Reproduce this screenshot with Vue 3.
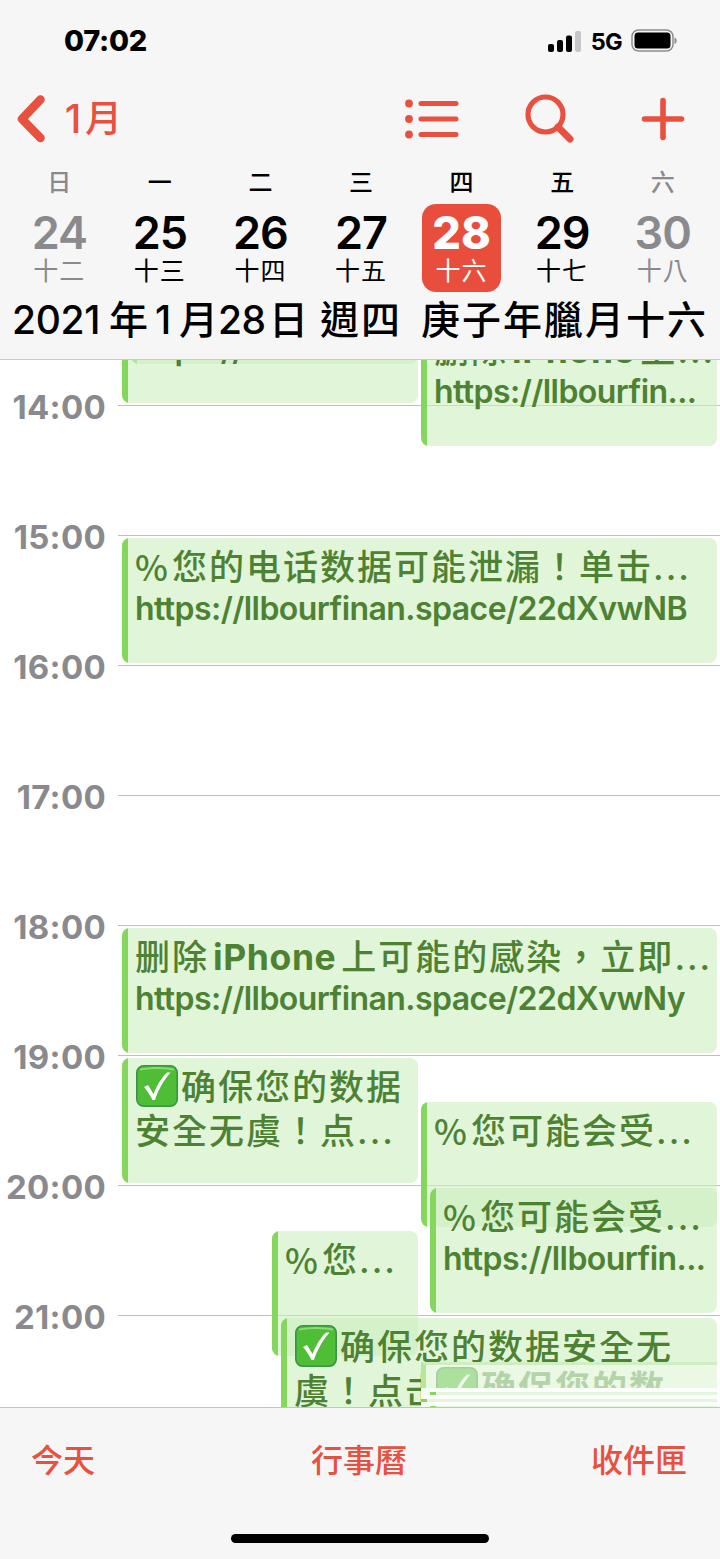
<template>
  <div class="phone">
    <header class="top">
      <div class="status-bar">
        <span class="clock">07:02</span>
        <div class="status-icons">
          <svg class="signal" width="33" height="21" viewBox="0 0 33 21">
            <rect x="0" y="13" width="6" height="8" rx="2" />
            <rect x="9" y="9" width="6" height="12" rx="2" />
            <rect x="18" y="4.500" width="6" height="16.500" rx="2" />
            <rect x="27" y="0" width="6" height="21" rx="2" fill="#c6c6c6" />
          </svg>
          <span class="network">5G</span>
          <svg class="battery" width="47" height="24" viewBox="0 0 47 24">
            <rect x="1" y="1" width="41" height="21" rx="6.500" fill="none" stroke="#8f8f8f" stroke-width="1.500" />
            <rect x="3.500" y="3.500" width="36" height="16" rx="3.500" />
            <path d="M43.500 8.500c3 1 3 5.500 0 6.500z" fill="#8f8f8f" />
          </svg>
        </div>
      </div>

      <nav class="nav-bar">
        <button class="back">
          <svg width="30" height="48" viewBox="0 0 30 48">
            <path d="M24.500 4.500L6 24l18.500 19" fill="none" stroke="currentColor" stroke-width="8.500" stroke-linecap="round" stroke-linejoin="round" />
          </svg>
          <span class="back-label"><span class="back-num">1</span>月</span>
        </button>
        <div class="nav-actions">
          <svg width="54" height="40" viewBox="0 0 54 40">
            <g fill="currentColor">
              <circle cx="4" cy="4.500" r="3.900" />
              <circle cx="4" cy="20" r="3.900" />
              <circle cx="4" cy="35.500" r="3.900" />
            </g>
            <path d="M16 4.500h35M16 20h35M16 35.500h35" stroke="currentColor" stroke-width="5" stroke-linecap="round" />
          </svg>
          <svg width="50" height="50" viewBox="0 0 50 50">
            <circle cx="20.500" cy="20.500" r="17.500" fill="none" stroke="currentColor" stroke-width="5.200" />
            <path d="M33 33l12 12" stroke="currentColor" stroke-width="7" stroke-linecap="round" />
          </svg>
          <svg width="44" height="44" viewBox="0 0 44 44">
            <path d="M22 3.500v37M3.500 22h37" stroke="currentColor" stroke-width="5.600" stroke-linecap="round" />
          </svg>
        </div>
      </nav>

      <div class="week">
        <div
          v-for="day in days"
          :key="day.num"
          class="day"
          :class="{ weekend: day.weekend, selected: day.selected }"
        >
          <span class="weekday">{{ day.name }}</span>
          <div class="day-box">
            <span class="day-num">{{ day.num }}</span>
            <span class="day-lunar">{{ day.lunar }}</span>
          </div>
        </div>
      </div>

      <h1 class="full-date">
        <span class="date-year">2021</span><span class="date-nian">年</span><span class="date-month">1</span><span class="date-yue">月</span><span class="date-day">28</span><span class="date-ri">日</span><span class="date-week">週四</span><span>庚子年臘月十六</span>
      </h1>
    </header>

    <main class="timeline">
      <div v-for="hour in hours" :key="hour" class="hour-row">
        <span class="hour-label">{{ hour }}</span>
        <span class="hour-line"></span>
      </div>

      <article
        v-for="(event, index) in events"
        :key="index"
        class="event"
        :style="{ left: event.left + 'px', top: event.top + 'px', width: event.width + 'px' }"
      >
        <p v-for="(line, i) in event.title" :key="i" class="event-title">
          <svg v-if="event.check && i === 0" class="check" viewBox="0 0 42 42">
            <rect x="0.800" y="0.800" width="40.400" height="40.400" rx="7" fill="#4fbd35" stroke="#389344" stroke-width="1.600" />
            <path d="M4 4.500q17-3 34 0" fill="none" stroke="#8bdc74" stroke-width="2" />
            <path d="M8 22l4-2 5.500 9C21 20 26 12 31 7.500h3.500C28 15 22 25 19 35h-2.500C14 30 11 25.500 8 22z" fill="#fff" />
          </svg><template v-for="(part, j) in line" :key="j"><span :class="part.type">{{ part.text }}</span></template>
        </p>
        <p v-if="event.url" class="event-url">{{ event.url }}</p>
      </article>

      <!-- next event, half faded in while the list redraws -->
      <div class="ghost">
        <div class="ghost-body">
          <svg class="check" viewBox="0 0 42 42">
            <rect x="0.800" y="0.800" width="40.400" height="40.400" rx="7" fill="#4fbd35" stroke="#389344" stroke-width="1.600" />
            <path d="M8 22l4-2 5.500 9C21 20 26 12 31 7.500h3.500C28 15 22 25 19 35h-2.500C14 30 11 25.500 8 22z" fill="#fff" />
          </svg>
          <span>确保您的数</span>
        </div>
        <div class="stripe inset"></div>
        <div class="stripe"></div>
        <div class="stripe inset"></div>
      </div>
    </main>

    <footer class="toolbar">
      <div class="toolbar-actions">
        <button>今天</button>
        <button>行事曆</button>
        <button>收件匣</button>
      </div>
      <div class="home-indicator"></div>
    </footer>
  </div>
</template>

<script setup>
const days = [
  { name: '日', num: 24, lunar: '十二', weekend: true },
  { name: '一', num: 25, lunar: '十三' },
  { name: '二', num: 26, lunar: '十四' },
  { name: '三', num: 27, lunar: '十五' },
  { name: '四', num: 28, lunar: '十六', selected: true },
  { name: '五', num: 29, lunar: '十七' },
  { name: '六', num: 30, lunar: '十八', weekend: true }
]

const hours = ['14:00', '15:00', '16:00', '17:00', '18:00', '19:00', '20:00', '21:00']

const cjk = (text) => ({ type: 'cjk', text })
const latin = (text) => ({ type: 'latin', text })
const percent = { type: 'percent', text: '%' }
const dots = { type: 'dots', text: '...' }

// top and left are measured from the visible edge of the timeline
const events = [
  { left: 131, top: -121, width: 287, title: [] },
  { left: 122, top: -82, width: 296, title: [[]], url: 'https://llbourfin...' },
  { left: 421, top: -39, width: 296, title: [[cjk('删除'), latin('iPhone'), cjk('上'), dots]], url: 'https://llbourfin...' },
  { left: 122, top: 178, width: 595, title: [[percent, cjk('您的电话数据可能泄漏！单击'), dots]], url: 'https://llbourfinan.space/22dXvwNB' },
  { left: 122, top: 568, width: 595, title: [[cjk('删除'), latin('iPhone'), cjk('上可能的感染，立即'), dots]], url: 'https://llbourfinan.space/22dXvwNy' },
  { left: 122, top: 698, width: 296, check: true, title: [[cjk('确保您的数据')], [cjk('安全无虞！点'), dots]] },
  { left: 421, top: 742, width: 296, title: [[percent, cjk('您可能会受'), dots]] },
  { left: 430, top: 828, width: 287, title: [[percent, cjk('您可能会受'), dots]], url: 'https://llbourfin...' },
  { left: 272, top: 871, width: 146, title: [[percent, cjk('您'), dots]] },
  { left: 281, top: 958, width: 436, check: true, title: [[cjk('确保您的数据安全无')], [cjk('虞！点击')]] }
]
</script>

<style>
body {
  margin: 0;
}
</style>

<style scoped>
.phone {
  width: 720px;
  height: 1559px;
  display: flex;
  flex-direction: column;
  overflow: hidden;
  background: #ffffff;
  color: #000000;
  font-family: Inter, 'Noto Sans CJK TC', sans-serif;
}

button {
  border: none;
  background: none;
  padding: 0;
  color: inherit;
  font: inherit;
}

.top {
  height: 359px;
  flex-shrink: 0;
  background: #f6f6f6;
  border-bottom: 1px solid #c9c9c9;
}

.status-bar {
  height: 82px;
  box-sizing: border-box;
  padding: 0 42px 0 64px;
  display: flex;
  align-items: center;
  justify-content: space-between;
}

.clock {
  font-size: 29px;
  line-height: 34px;
  margin-top: -1px;
  font-weight: 800;
  letter-spacing: -0.3px;
}

.status-icons {
  display: flex;
  align-items: center;
}

.network {
  margin: 1px 9px 0 10px;
  font-size: 23.500px;
  line-height: 24px;
  font-weight: 700;
  letter-spacing: -0.7px;
}

.nav-bar {
  height: 74px;
  padding: 0 35px 0 16px;
  display: flex;
  align-items: center;
  justify-content: space-between;
  color: #e8503f;
}

.back {
  display: flex;
  align-items: center;
  gap: 15px;
}

.back-label {
  display: flex;
  font-size: 37px;
  line-height: 48px;
  font-weight: 500;
}

.back-num {
  width: 24px;
  font-size: 40px;
}

.nav-actions {
  display: flex;
  align-items: center;
}

.nav-actions svg:nth-child(2) {
  margin: 0 66px;
}

.week {
  padding: 0 7px 0 9px;
  display: grid;
  grid-template-columns: repeat(7, 1fr);
}

.day {
  display: flex;
  flex-direction: column;
  align-items: center;
}

.weekday {
  height: 48px;
  line-height: 53px;
  font-size: 24px;
  font-weight: 500;
}

.day-box {
  width: 79px;
  height: 88px;
  border-radius: 14px;
  display: flex;
  flex-direction: column;
  align-items: center;
}

.day-num {
  margin-top: 4px;
  font-size: 45px;
  line-height: 50px;
  font-weight: 600;
  letter-spacing: -1px;
}

.day-lunar {
  font-size: 25px;
  line-height: 26px;
  letter-spacing: 1px;
}

.weekend {
  color: #8a8a8e;
}

.selected .day-box {
  background: #e94e3d;
  color: #ffffff;
}

.selected .day-num {
  font-weight: 800;
  letter-spacing: 0;
}

.full-date {
  margin: 0;
  padding-left: 12px;
  display: flex;
  white-space: nowrap;
  font-size: 39px;
  line-height: 56px;
  font-weight: 500;
  letter-spacing: 2px;
}

.date-year {
  width: 97px;
  letter-spacing: -0.3px;
}

.date-nian {
  width: 46px;
}

.date-month {
  width: 24px;
}

.date-yue {
  width: 39px;
}

.date-day {
  width: 51px;
  letter-spacing: -0.5px;
}

.date-ri {
  width: 51px;
}

.date-week {
  width: 101px;
}

.timeline {
  position: relative;
  flex: 1;
  min-height: 0;
  padding-top: 45px;
  overflow: hidden;
}

.hour-row {
  height: 130px;
  display: flex;
}

.hour-label {
  width: 106px;
  height: 40px;
  margin: -18px 12px 0 0;
  text-align: right;
  font-size: 33px;
  line-height: 40px;
  font-weight: 700;
  letter-spacing: 0.3px;
  color: #8a8a8e;
}

.hour-line {
  flex: 1;
  border-top: 1px solid #bfbfc2;
}

.event {
  position: absolute;
  height: 125px;
  box-sizing: border-box;
  padding: 7px 0 0 13px;
  overflow: hidden;
  border-radius: 8px;
  background: rgba(205, 238, 192, 0.6);
  color: #4d8233;
}

.event::before {
  content: '';
  position: absolute;
  left: 0;
  top: 0;
  width: 6px;
  height: 100%;
  background: #84d75c;
}

.event-title {
  margin: 0;
  display: flex;
  height: 44px;
  white-space: nowrap;
  font-size: 35px;
  line-height: 45px;
  font-weight: 500;
}

.cjk {
  letter-spacing: 2px;
}

.percent {
  width: 37px;
  line-height: 42px;
  font-family: 'Noto Sans CJK TC', sans-serif;
}

.latin {
  margin: 0 5px 0 4px;
  font-weight: 700;
  font-size: 35.500px;
  letter-spacing: 0.6px;
}

.dots {
  letter-spacing: 2px;
}

.check {
  width: 42px;
  height: 42px;
  margin: 0 3px 0 1px;
  flex-shrink: 0;
}

.event-url {
  margin: 0;
  font-size: 32px;
  line-height: 40px;
  font-weight: 600;
  letter-spacing: -0.55px;
  white-space: nowrap;
}

.ghost {
  position: absolute;
  left: 421px;
  top: 1002px;
  width: 296px;
  height: 46px;
  background: #f4fbf1;
}

.ghost-body {
  height: 26px;
  box-sizing: border-box;
  padding: 2px 0 0 14px;
  display: flex;
  overflow: hidden;
  border-left: 5px solid #b4e79b;
  border-top: 3px solid #cfeec2;
  background: #eaf8e4;
  font-size: 35px;
  line-height: 42px;
  font-weight: 700;
  letter-spacing: 2px;
  color: #b5d3a8;
}

.ghost-body .check {
  margin: 0 3px 0 -4px;
  opacity: 0.4;
}

.stripe {
  height: 3px;
  border-top: 4px solid #fbfefa;
  background: linear-gradient(to right, #84d75c 6px, #e3f5dc 6px);
}

.stripe.inset {
  margin-left: 9px;
}

.toolbar {
  height: 151px;
  flex-shrink: 0;
  display: flex;
  flex-direction: column;
  align-items: center;
  justify-content: space-between;
  background: #f6f6f6;
  border-top: 1px solid #c3c3c3;
}

.toolbar-actions {
  width: 100%;
  box-sizing: border-box;
  padding: 29px 33px 0 31px;
  display: grid;
  grid-template-columns: 1fr auto 1fr;
  font-size: 32px;
  line-height: 48px;
  font-weight: 500;
  color: #e8503f;
}

.toolbar-actions button:first-child {
  justify-self: start;
}

.toolbar-actions button:last-child {
  justify-self: end;
}

.home-indicator {
  width: 258px;
  height: 9px;
  margin-bottom: 16px;
  border-radius: 5px;
  background: #000000;
}
</style>
